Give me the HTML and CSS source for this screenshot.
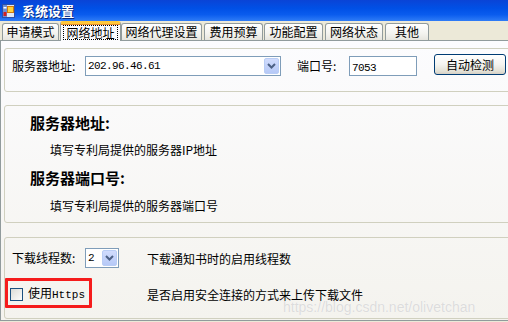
FILE: index.html
```html
<!DOCTYPE html>
<html>
<head>
<meta charset="utf-8">
<link rel="stylesheet" href="styles.css">
</head>
<body>
<div class="window">
  <div class="titlebar">
    <svg class="appicon" width="13" height="14" viewBox="0 0 13 14">
      <rect x="0.5" y="0.5" width="12" height="13" fill="#dfe8f7" stroke="#2c4fa8"/>
      <rect x="1" y="1" width="4" height="12" fill="#6d8fd6"/>
      <rect x="1.5" y="8" width="3" height="4" fill="#d21f1f"/>
      <rect x="1.5" y="3" width="3" height="1.5" fill="#ffffff"/>
      <rect x="5.5" y="2.5" width="6" height="6" fill="#ffd23a" stroke="#d07a10"/>
    </svg>
    <span class="title">系统设置</span>
  </div>
  <div class="tabstrip">
    <div class="tab w57">申请模式</div>
    <div class="tab sel"><span class="focus">网络地址</span></div>
    <div class="tab w81">网络代理设置</div>
    <div class="tab w59 g2">费用预算</div>
    <div class="tab w59">功能配置</div>
    <div class="tab w58 g2">网络状态</div>
    <div class="tab w44 g2">其他</div>
  </div>
  <div class="panel">
    <div class="group g-server">
      <span class="lbl l73">服务器地址:</span>
      <div class="combo wide">
        <span class="mono">202.96.46.61</span>
        <span class="dd"><svg width="9" height="6" viewBox="0 0 9 6"><polyline points="1,1 4.5,4.5 8,1" fill="none" stroke="#4d6185" stroke-width="2"/></svg></span>
      </div>
      <span class="lbl l52">端口号:</span>
      <div class="textbox"><span class="mono">7053</span></div>
      <div class="button">自动检测</div>
    </div>
    <div class="group g-info">
      <div class="head">服务器地址:</div>
      <div class="desc d1">填写专利局提供的服务器IP地址</div>
      <div class="head h2">服务器端口号:</div>
      <div class="desc d2">填写专利局提供的服务器端口号</div>
    </div>
    <div class="group g-dl">
      <div class="cell">
        <span class="lbl l73">下载线程数:</span>
        <div class="combo small">
          <span class="mono">2</span>
          <span class="dd"><svg width="9" height="6" viewBox="0 0 9 6"><polyline points="1,1 4.5,4.5 8,1" fill="none" stroke="#4d6185" stroke-width="2"/></svg></span>
        </div>
      </div>
      <div class="cell note">下载通知书时的启用线程数</div>
      <div class="cell chkcell">
        <span class="check"></span>
        <span class="chklbl">使用<span class="mono">Https</span></span>
        <span class="redbox"></span>
      </div>
      <div class="cell note">是否启用安全连接的方式来上传下载文件</div>
    </div>
    <div class="watermark">https://blog.csdn.net/olivetchan</div>
  </div>
</div>
</body>
</html>
```

FILE: styles.css
```css
* { box-sizing: border-box; }
html, body { margin: 0; padding: 0; }
body {
  width: 508px; height: 322px; overflow: hidden;
  font-family: "Noto Sans CJK SC", "Liberation Sans", sans-serif;
  font-size: 12px; color: #000;
  background: #ece9d8;
}
.window { width: 508px; height: 322px; overflow: hidden; position: relative; }
.titlebar {
  height: 21px; display: flex; align-items: center; padding-left: 2px; gap: 7px;
  background: linear-gradient(#0a44d6 0%, #0050e6 40%, #0a5cee 70%, #2f7cf6 100%);
}
.appicon { display: block; }
.title { color: #fff; font-weight: 700; font-size: 13px; line-height: 16px; text-shadow: 1px 1px 0 #0a2a80; }
.tabstrip {
  height: 19px; display: flex; align-items: flex-end; padding-left: 2px;
  background: #ece9d8;
}
.tab {
  height: 17px; border: 1px solid #919b9c; border-bottom: none;
  border-radius: 3px 3px 0 0;
  background: linear-gradient(#ffffff, #f3f3ef 60%, #e6e5de);
  display: flex; align-items: center; justify-content: center;
  line-height: 14px; margin-right: 1px;
}
.w57 { width: 57px; }
.w81 { width: 81px; }
.w59 { width: 59px; }
.w58 { width: 58px; }
.w44 { width: 44px; }
.g2 { margin-left: 1px; }
.tab.sel {
  width: 61px; height: 20px; margin-bottom: -1px; position: relative; z-index: 2;
  background: #fcfcfe; border-top: 3px solid #ffc83c;
  box-shadow: inset 0 1px 0 #e68b2c; margin-left: 0; margin-right: 0;
  align-items: flex-start; padding-top: 0;
}
.focus { border: 1px dotted #000; padding: 0 2px; line-height: 13px; margin-top: 1px; }
.panel {
  height: 281px; position: relative;
  border-top: 1px solid #919b9c; border-left: 1px solid #919b9c; border-bottom: 1px solid #919b9c;
  background: linear-gradient(#fcfcfe, #f4f3ee);
  padding-left: 3px;
}
.group {
  width: 540px; border: 1px solid #d0d0bf; border-radius: 3px;
}
.g-server {
  margin-top: 7px; height: 44px; display: flex;
  padding: 7px 0 0 7px; align-items: flex-start;
}
.lbl { line-height: 20px; height: 20px; }
.l73 { width: 73px; }
.l52 { width: 52px; margin-left: 16px; }
.mono { font-family: "Liberation Mono", "DejaVu Sans Mono", monospace; font-size: 11px; letter-spacing: -0.6px; }
.combo {
  height: 20px; border: 1px solid #7f9db9; background: #fff;
  display: flex; align-items: center; justify-content: space-between; padding: 0 1px 0 2px;
}
.combo.wide { width: 196px; }
.combo.small { width: 34px; }
.dd {
  width: 15px; height: 16px; border-radius: 2px;
  background: linear-gradient(#d1dcfd, #b6c9f7);
  border: 1px solid #b9cdf5;
  display: flex; align-items: center; justify-content: center;
}
.dd svg { display: block; }
.textbox {
  width: 68px; height: 20px; border: 1px solid #7f9db9; background: #fff;
  padding-left: 2px; line-height: 17px;
}
.button {
  width: 72px; height: 21px; margin-left: 17px; margin-top: -2px;
  border: 1px solid #003c74; border-radius: 3px;
  background: linear-gradient(#ffffff, #f4f4f0 50%, #e3e1d6 85%, #d6d0c5);
  display: flex; align-items: center; justify-content: center; line-height: 14px;
}
.g-info {
  margin-top: 13px; height: 118px; padding: 7px 0 0 25px;
}
.head { font-size: 15px; font-weight: 700; line-height: 20px; height: 20px; }
.desc { line-height: 16px; padding-left: 20px; }
.d1 { margin-top: 9px; }
.h2 { margin-top: 10px; }
.d2 { margin-top: 10px; }
.g-dl {
  margin-top: 14px; height: 82px; padding: 10px 0 0 7px;
  display: grid; grid-template-columns: 135px 1fr; grid-template-rows: 20px 20px; row-gap: 16px;
  align-items: center;
}
.cell { display: flex; align-items: center; height: 20px; }
.note { line-height: 14px; height: 16px; padding-top: 1px; }
.chkcell { position: relative; }
.check {
  width: 13px; height: 13px; border: 1px solid #1c5180; margin-left: -2px;
  background: linear-gradient(135deg, #dcdcd7, #fdfdfc);
}
.chklbl { margin-left: 5px; line-height: 16px; }
.chklbl .mono { letter-spacing: 0; }
.redbox {
  position: absolute; left: -7px; top: -6px; width: 87px; height: 30px;
  border: 3px solid #f51c1c; border-radius: 1px;
}
.watermark {
  position: absolute; left: 282px; top: 259px;
  font-family: "Liberation Sans", Arial, sans-serif; font-size: 14px; line-height: 14px; color: #dcdcdc;
  text-shadow: 0 0 1px #fff;
}
```
